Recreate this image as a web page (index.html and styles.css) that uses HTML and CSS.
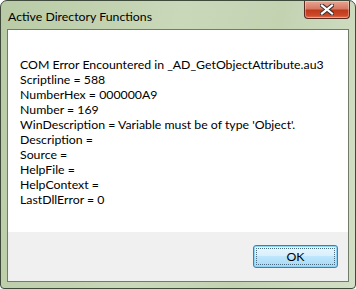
FILE: index.html
```html
<!DOCTYPE html>
<html>
<head>
	<meta charset="utf-8">
	<title>Active Directory Functions</title>
	<link rel="stylesheet" href="styles.css">
</head>
<body>
	<div class="window">
		<div class="titlebar">
			<span class="title">Active Directory Functions</span>
			<button class="close">
				<svg width="14" height="11" viewBox="0 0 14 11">
					<path d="M2 1.5 L12 9.5 M12 1.5 L2 9.5" stroke="#3a3030" stroke-width="4.2" stroke-linecap="square"/>
					<path d="M2 1.5 L12 9.5 M12 1.5 L2 9.5" stroke="#ffffff" stroke-width="2.2" stroke-linecap="square"/>
				</svg>
			</button>
		</div>
		<div class="client">
			<div class="message">
				<p>COM Error Encountered in _AD_GetObjectAttribute.au3</p>
				<p>Scriptline = 588</p>
				<p>NumberHex = 000000A9</p>
				<p>Number = 169</p>
				<p>WinDescription = Variable must be of type 'Object'.</p>
				<p>Description =</p>
				<p>Source =</p>
				<p>HelpFile =</p>
				<p>HelpContext =</p>
				<p>LastDllError = 0</p>
			</div>
			<div class="buttons">
				<button class="ok"><span>OK</span></button>
			</div>
		</div>
	</div>
</body>
</html>
```

FILE: styles.css
```css
*{
	padding: 0;
	margin: 0;
	box-sizing: border-box;
}
body{
	width: 356px;
	height: 289px;
	font-family: "Lato", "Liberation Sans", sans-serif;
	font-size: 12.3px;
	color: #000000;
}
.window{
	width: 356px;
	height: 289px;
	border: 1px solid #3f4a3a;
	border-radius: 7px 7px 4px 4px;
	background: linear-gradient(100deg, #b9cba6 0%, #c9d8b9 45%, #c3d3b2 70%, #d3dfc6 100%);
	padding: 0 6px 6px 6px;
	display: flex;
	flex-direction: column;
}
.titlebar{
	height: 28px;
	display: flex;
	align-items: flex-start;
	justify-content: space-between;
}
.title{
	padding: 8px 0 0 1px;
	line-height: 15px;
	color: #000000;
}
.close{
	width: 46px;
	height: 18px;
	margin-right: -1px;
	border: 1px solid #5a2a22;
	border-top: none;
	border-radius: 0 0 4px 4px;
	background: linear-gradient(#e8a595 0%, #d67a63 45%, #c0391b 55%, #cc4a2a 85%, #e07a55 100%);
	box-shadow: inset 0 0 0 1px rgba(255,255,255,0.35);
	display: flex;
	align-items: center;
	justify-content: center;
}
.close svg{
	display: block;
}
.client{
	flex: 1;
	border: 1px solid #707c68;
	display: flex;
	flex-direction: column;
}
.message{
	flex: 1;
	background: #ffffff;
	padding: 27px 12px 0 12px;
	line-height: 15px;
}
.buttons{
	height: 49px;
	background: #f0f0f0;
	display: flex;
	justify-content: flex-end;
	align-items: flex-start;
	padding: 13px 10px 0 0;
}
.ok{
	width: 85px;
	height: 23px;
	border: 1px solid #3c7fb1;
	border-radius: 3px;
	background: linear-gradient(#eaf6fd 0%, #d9f0fc 45%, #bee6fd 50%, #a7d9f5 100%);
	box-shadow: inset 0 0 0 1px #8fd3f7;
	font-family: "Lato", "Liberation Sans", sans-serif;
	font-size: 12.3px;
	color: #000000;
	padding: 2px;
}
.ok span{
	display: flex;
	align-items: center;
	justify-content: center;
	height: 100%;
	border: 1px dotted #4a6a80;
	border-radius: 1px;
}
```
